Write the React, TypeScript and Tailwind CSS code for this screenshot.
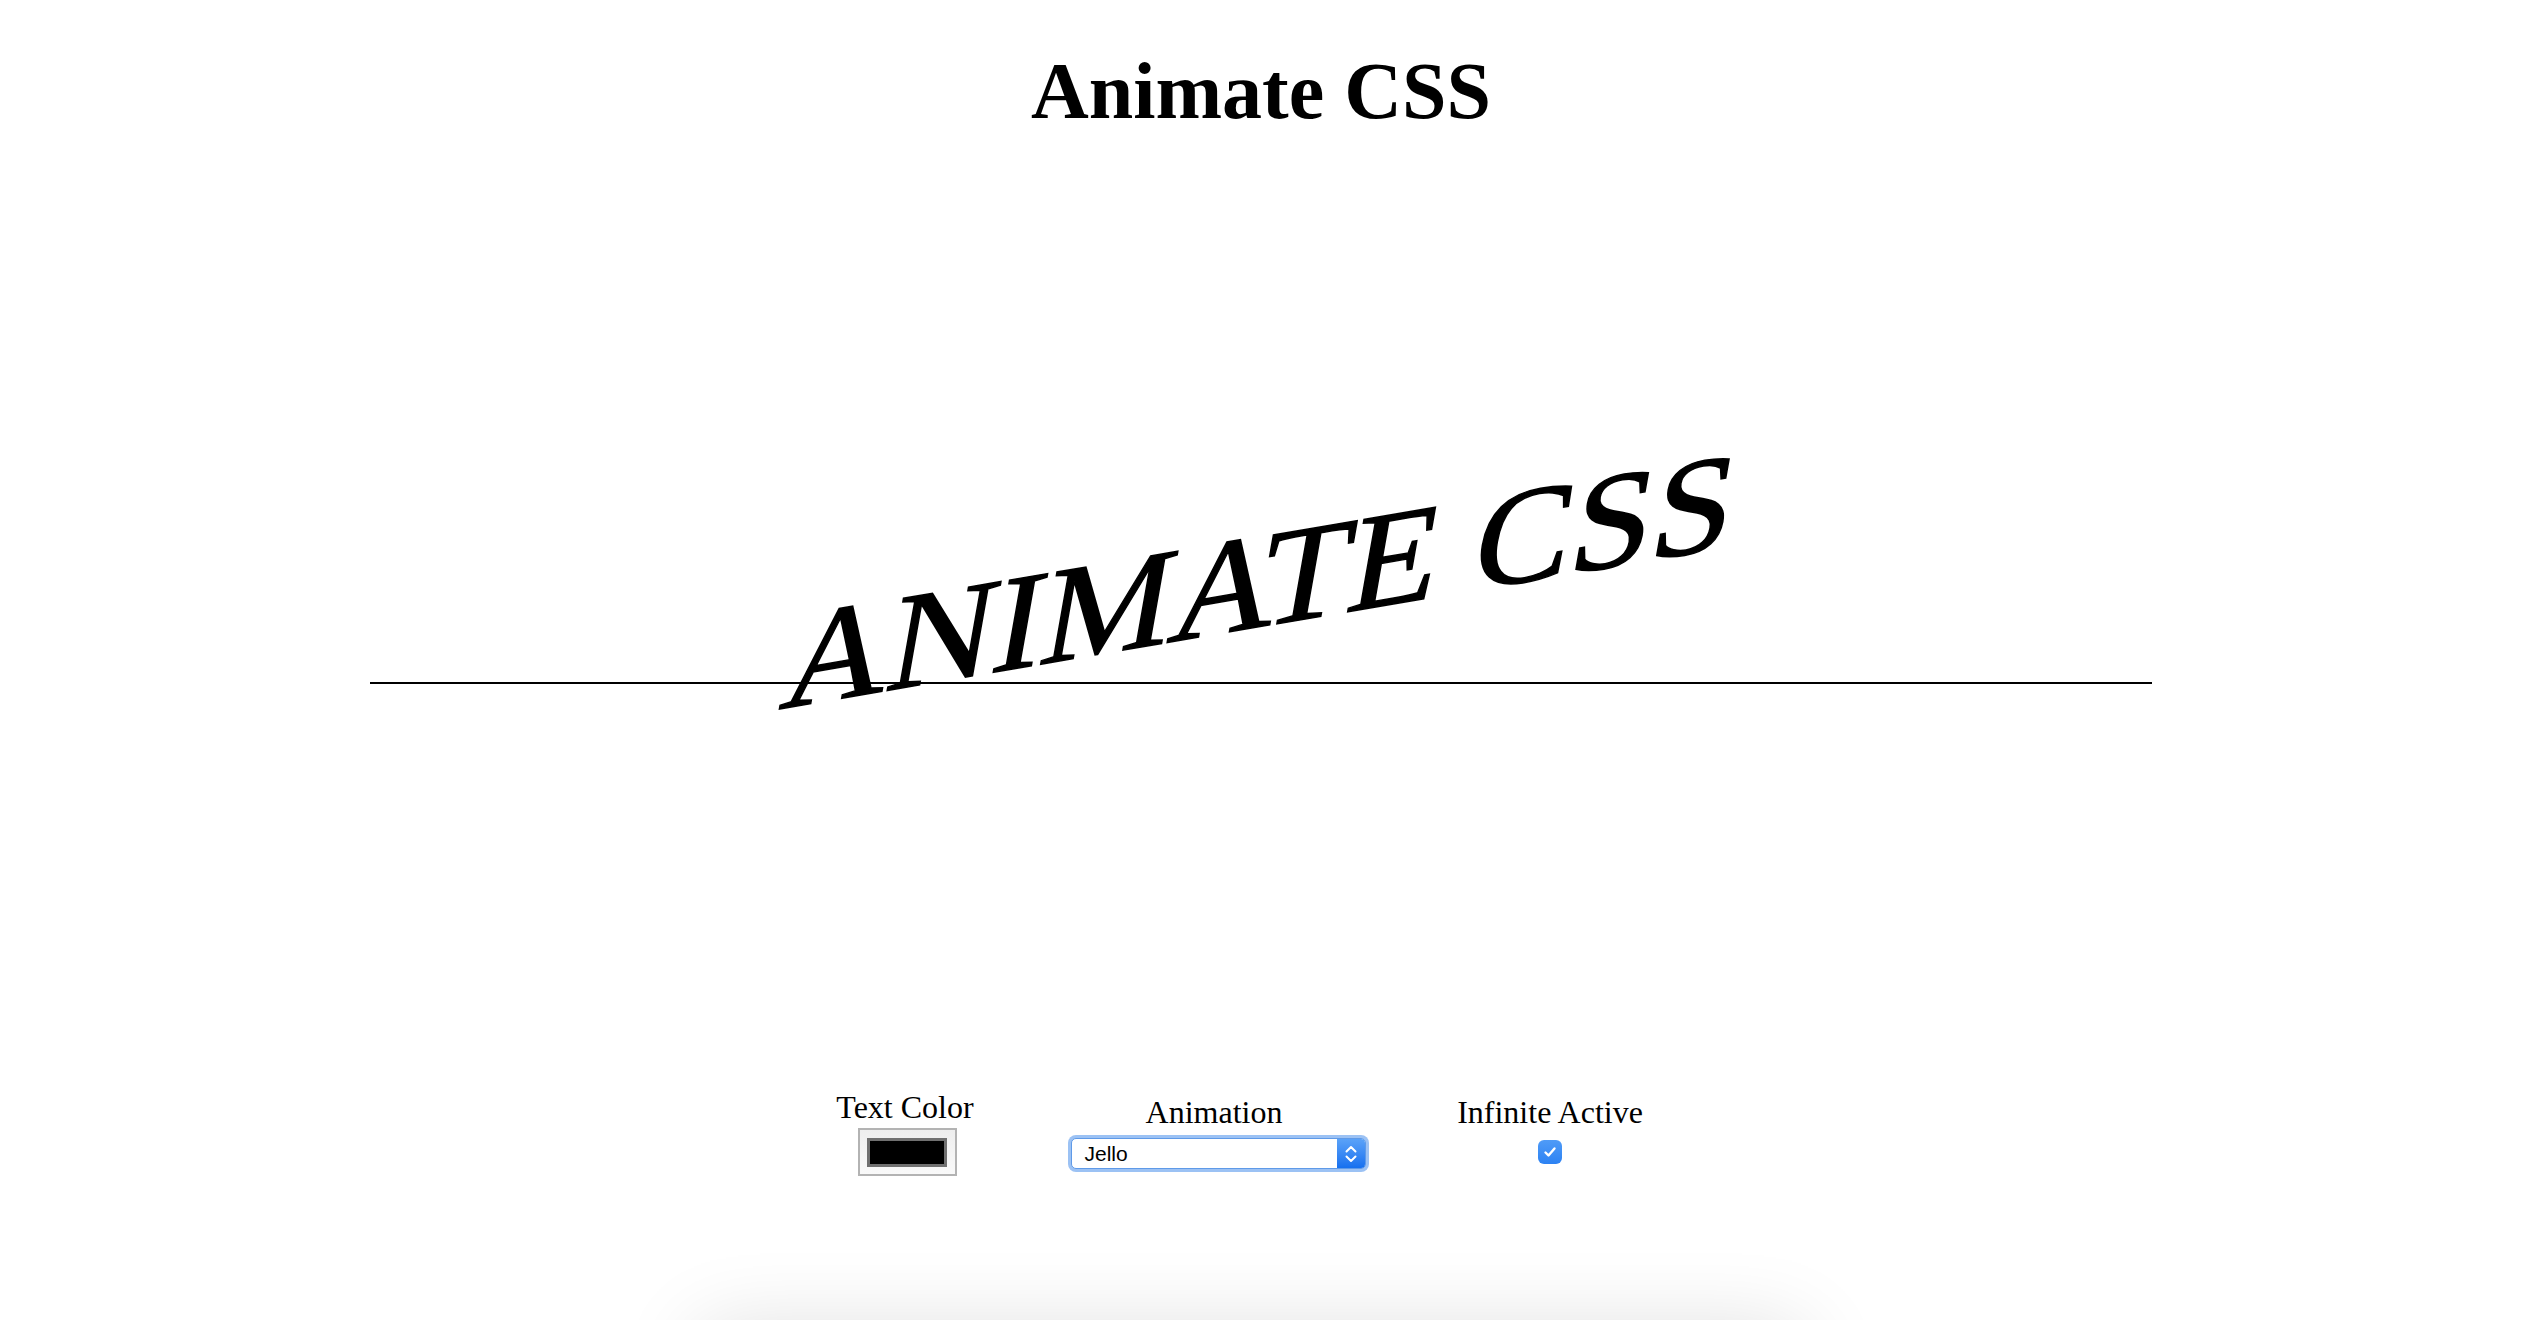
import { useState } from "react";

const serif = "font-['Liberation_Serif','Times_New_Roman',serif]";

const SelectArrows = () => (
  <svg width="14" height="20" viewBox="0 0 14 20" fill="none">
    <path d="M2.5 7.5 L7 3 L11.5 7.5" stroke="white" strokeWidth="2" strokeLinecap="round" strokeLinejoin="round" />
    <path d="M2.5 12.5 L7 17 L11.5 12.5" stroke="white" strokeWidth="2" strokeLinecap="round" strokeLinejoin="round" />
  </svg>
);

const Check = () => (
  <svg width="16" height="16" viewBox="0 0 16 16" fill="none">
    <path d="M3.5 8.5 L6.5 11.5 L12.5 4.5" stroke="white" strokeWidth="2.4" strokeLinecap="round" strokeLinejoin="round" />
  </svg>
);

const App = () => {
  const [infinite, setInfinite] = useState(true);

  return (
    <div className={`h-[1320px] overflow-hidden bg-white text-black ${serif}`}>
      {/* Title */}
      <h1 className="pt-[51px] text-center text-[80px] font-bold leading-none">
        Animate CSS
      </h1>

      {/* Animated text */}
      <div className="mt-[379px] text-center text-[141px] leading-none [-webkit-text-stroke:1.5px_black] [transform:skewX(-10deg)_skewY(-10deg)]">
        ANIMATE CSS
      </div>
      <div className="mx-auto mt-[31px] w-[1782px] border-t-2 border-black"></div>

      {/* Controls */}
      <div className="mt-[407px] flex justify-center pr-[42px]">
        <div className="flex w-[140px] flex-col items-center">
          <label className="text-[32px] leading-none">Text Color</label>
          <div className="ml-[4px] mt-[5px] flex h-[48px] w-[99px] items-center justify-center border-2 border-[#b3b3b3] bg-gradient-to-b from-[#eeeeee] to-[#f9f9f9]">
            <div className="h-[29px] w-[80px] border-[3px] border-[#707070] bg-black"></div>
          </div>
        </div>

        <div className="ml-[92px] mt-[5px] flex w-[302px] flex-col items-center">
          <label className="pr-[8px] text-[32px] leading-none">Animation</label>
          <div className="mt-[10px] flex h-[31px] w-[295px] items-center overflow-hidden rounded-[5px] border border-[#5f9ae8] bg-white shadow-[0_0_0_3px_#9cc2f4]">
            <span className="flex-1 pl-[13px] font-['Liberation_Sans',Arial,sans-serif] text-[21px] leading-none">
              Jello
            </span>
            <div className="flex h-full w-[28px] items-center justify-center bg-gradient-to-b from-[#5aa2f8] to-[#1570ef]">
              <SelectArrows />
            </div>
          </div>
        </div>

        <div className="ml-[86px] mt-[5px] flex w-[190px] flex-col items-center">
          <label className="text-[32px] leading-none">Infinite Active</label>
          <button
            onClick={() => setInfinite(!infinite)}
            className="mt-[12px] flex h-[24px] w-[24px] items-center justify-center rounded-[6px] bg-gradient-to-b from-[#4f9bf7] to-[#2c82f3]"
          >
            {infinite && <Check />}
          </button>
        </div>
      </div>

      {/* Card below the fold */}
      <div className="mx-auto mt-[155px] h-[400px] w-[1100px] -translate-x-[10px] bg-white shadow-[0_0_80px_rgba(0,0,0,0.14)]"></div>
    </div>
  );
};

export default App;
